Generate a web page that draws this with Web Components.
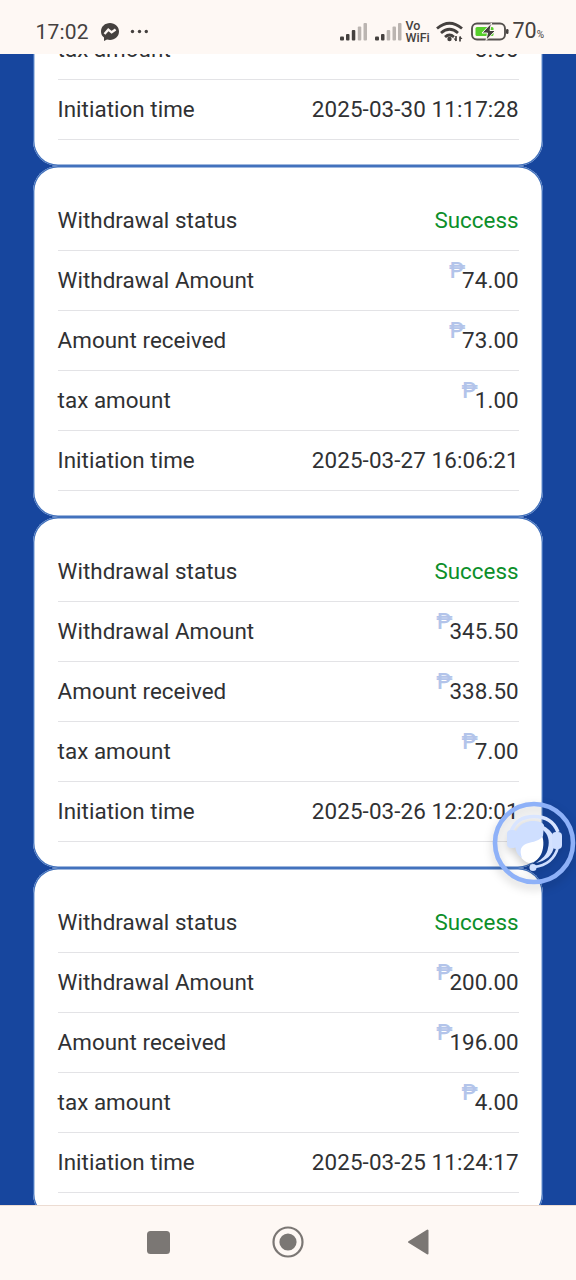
<!DOCTYPE html>
<html lang="en"><head><meta charset="utf-8"><title>Withdrawal records</title>
<style>html,body{margin:0;height:100%;overflow:hidden}body{font-family:Roboto,"Liberation Sans",sans-serif;background:#17469e}</style></head>
<body><withdrawal-app></withdrawal-app>
<script>
const define = (name, html) => customElements.define(name, class extends HTMLElement {
  constructor() {
    super();
    const t = document.createElement('template');
    t.innerHTML = html;
    this.attachShadow({mode: 'open'}).append(t.content.cloneNode(true));
  }
});

define('status-bar', `<style>
:host{display:flex;flex:none;height:54px;box-sizing:border-box;background:#fef8f4;color:#45413f;padding:9px 32px 0 35.500px;align-items:center;justify-content:space-between}
.l,.r{display:flex;align-items:center;height:45px}
.time{font-size:21px;line-height:22px;letter-spacing:.2px;width:65px}
.vo{display:flex;flex-direction:column;font-size:12.500px;line-height:12px;font-weight:500;width:26px;margin-left:3px}
.pct{font-size:21.500px;line-height:24px;margin-left:4px;padding-top:2px}.pct small{font-size:10px}
svg{display:block}
</style>
<div class="l"><span class="time">17:02</span>
<svg width="50" height="20" viewBox="0 0 50 20"><path d="M9 1C4 1 0 4.500 0 9.500c0 2.500 1 4.500 3 6V19l3-1.500c1 .3 2 .4 3 .4 5 0 9-3.500 9-8.400S14 1 9 1z" fill="#45413f"/><path d="M3.500 12 7.300 7.700l3.300 2.600 4-2.800" fill="none" stroke="#fef8f4" stroke-width="2.300"/><g fill="#45413f"><circle cx="31.500" cy="9.500" r="1.700"/><circle cx="38.500" cy="9.500" r="1.700"/><circle cx="45.300" cy="9.500" r="1.700"/></g></svg></div>
<div class="r">
<svg width="62" height="20" viewBox="0 0 62 20" style="position:relative;left:-1px"><g fill="#45413f"><rect y="14.500" width="4" height="4" rx="1"/><rect x="6" y="12" width="3.500" height="6.500" rx="1"/><rect x="11.800" y="8" width="3.500" height="10.500" rx="1"/><rect x="35" y="14.500" width="4" height="4" rx="1"/><rect x="41" y="12" width="3.500" height="6.500" rx="1"/></g><g fill="#bbb5b1"><rect x="17.800" y="4.500" width="3.500" height="14" rx="1"/><rect x="23.500" y="1" width="3.500" height="17.500" rx="1"/><rect x="46.700" y="8" width="3.500" height="10.500" rx="1"/><rect x="52.500" y="4.500" width="3.500" height="14" rx="1"/><rect x="58" y="1" width="3.500" height="17.500" rx="1"/></g></svg>
<div class="vo"><span>Vo</span><span>WiFi</span></div>
<svg width="28" height="22" viewBox="0 0 28 22" style="margin-left:4px"><g fill="none" stroke="#45413f" stroke-width="2.800"><path d="M1 7.500Q13.500-3 26 7.500M5 12Q13.500 4.500 22 12M9 16Q13.500 12 18 16"/></g><circle cx="13.500" cy="18" r="2.200" fill="#45413f"/><path d="M20 15v5M24 20.500v-5" fill="none" stroke="#45413f" stroke-width="1.700"/><path d="M17.500 17.500h2.500v3zM26.500 18h-2.500v-3z" fill="#45413f"/></svg>
<svg width="38" height="20" viewBox="0 0 38 20" style="margin-left:7px"><rect x="1" y="1.500" width="33" height="16" rx="5" fill="none" stroke="#55514e" stroke-width="1.900"/><rect x="35" y="7" width="2.500" height="5" rx="1.200" fill="#45413f"/><rect x="4.500" y="5" width="18" height="9" rx="1.500" fill="#57cf2c"/><path d="M20.500 1 11 11h5.500L15 18.500l9.500-10h-5.500z" fill="#45413f" stroke="#fef8f4" stroke-width="1"/></svg>
<span class="pct">70<small>%</small></span></div>`);

define('record-card', `<style>
:host{display:flex;flex-direction:column;flex:none;box-sizing:border-box;height:351.150px;margin:0 32.700px;padding:24.900px 24.600px 0 24.900px;border-radius:25px;background:#fff;box-shadow:inset 0 0 0 1.400px #4372bd}
</style><slot></slot>`);

define('record-row', `<style>
:host{display:flex;flex:none;box-sizing:border-box;height:60.040px;align-items:center;justify-content:space-between;border-bottom:1px solid #e3e3e6;font-size:22.400px;line-height:25px;color:#303133;letter-spacing:.04px;white-space:nowrap}
</style><slot name="label"></slot><slot></slot>`);

define('peso-value', `<style>
:host{display:inline-flex;align-items:center;letter-spacing:.08px}
i{font:500 22px/22px Roboto,sans-serif;color:#b3c4ea;position:relative;top:-9px;margin-right:-3.200px}
</style><i>₱</i><slot></slot>`);

define('support-button', `<style>
:host{display:block;position:absolute;left:492px;top:801px;width:84px;height:84px;border-radius:50%;filter:drop-shadow(0 4px 5px #0003)}
svg{display:block}
</style><svg width="84" height="84" viewBox="0 0 84 84">
<path d="M19 31Q24 15.500 42 15.500T66 31" fill="none" stroke="#d9e5ff" stroke-width="3.500"/>
<path d="M51 29C56 33 58 40 56 47C55 54 50 58 44 62C54 60 61 54 62 45V36C60 31 56 27 50 24Z" fill="#d4e2ff"/>
<path d="M25 42C31 42 43 40 49 32C52 38 52 45 50 51C48 57 43 62 37 62C29 60 25 51 25 42Z" fill="#fff"/>
<path d="M23 45C20 29 29 20 41 20C46 20 50 21 52 24L51 35C46 42 38 40 32 44C28 47 28 51 30 57C25 54 24 50 23 45Z" fill="#cfdfff"/>
<rect x="15" y="29" width="10" height="18" rx="4" fill="#cfdfff"/><rect x="60" y="31" width="10" height="17" rx="4" fill="#cfdfff"/>
<path d="M66 46Q61 64 42 66" fill="none" stroke="#cfdfff" stroke-width="2.800"/><circle cx="41" cy="66.500" r="3.500" fill="#cfdfff"/>
<circle cx="42" cy="42" r="39" fill="none" stroke="#8eb1f8" stroke-width="4.600"/></svg>`);

define('nav-bar', `<style>
:host{display:flex;flex:none;height:75px;box-sizing:border-box;background:#fef8f4;border-top:1px solid #ecdcd2;align-items:center;justify-content:space-between;padding:0 147px 2px}
svg{display:block}
svg:nth-of-type(2){margin-left:-1px}
</style><svg width="23" height="23"><rect width="23" height="23" rx="3.500" fill="#7b7774"/></svg>
<svg width="32" height="32"><circle cx="16" cy="16" r="14.500" fill="none" stroke="#7b7774" stroke-width="2.200"/><circle cx="16" cy="16" r="8.600" fill="#7b7774"/></svg>
<svg width="22" height="26"><path d="M20.500 1.500v23L2 13z" fill="#7b7774" stroke="#7b7774" stroke-width="2" stroke-linejoin="round"/></svg>`);

customElements.define('withdrawal-app', class extends HTMLElement {
  connectedCallback() {
    const data = [['', '', '3.00', '2025-03-30 11:17:28'], ['74.00', '73.00', '1.00', '2025-03-27 16:06:21'], ['345.50', '338.50', '7.00', '2025-03-26 12:20:01'], ['200.00', '196.00', '4.00', '2025-03-25 11:24:17']];
    const row = (l, v) => `<record-row><span slot="label">${l}</span>${v}</record-row>`;
    const money = v => `<peso-value>${v}</peso-value>`;
    const cards = data.map(([a, b, t, d], i) => `<record-card${i ? '' : ' class="cut"'}>` +
      (i ? row('Withdrawal status', '<span class="ok">Success</span>') + row('Withdrawal Amount', money(a)) + row('Amount received', money(b)) : '') +
      row('tax amount', i ? money(t) : `<span>${t}</span>`) + row('Initiation time', `<span class="date">${d}</span>`) + '</record-card>').join('');
    this.attachShadow({mode: 'open'}).innerHTML = `<style>
:host{display:flex;flex-direction:column;width:576px;height:1280px;position:relative;overflow:hidden}
main{flex:1;min-height:0;overflow:hidden;display:flex;flex-direction:column;background:#17469e}
.cut{margin-top:-239.500px;padding-top:205.100px}.ok{color:#0c8f2a}.date{letter-spacing:.1px}
</style><status-bar></status-bar><main>${cards}</main><nav-bar></nav-bar><support-button></support-button>`;
  }
});
</script></body></html>
